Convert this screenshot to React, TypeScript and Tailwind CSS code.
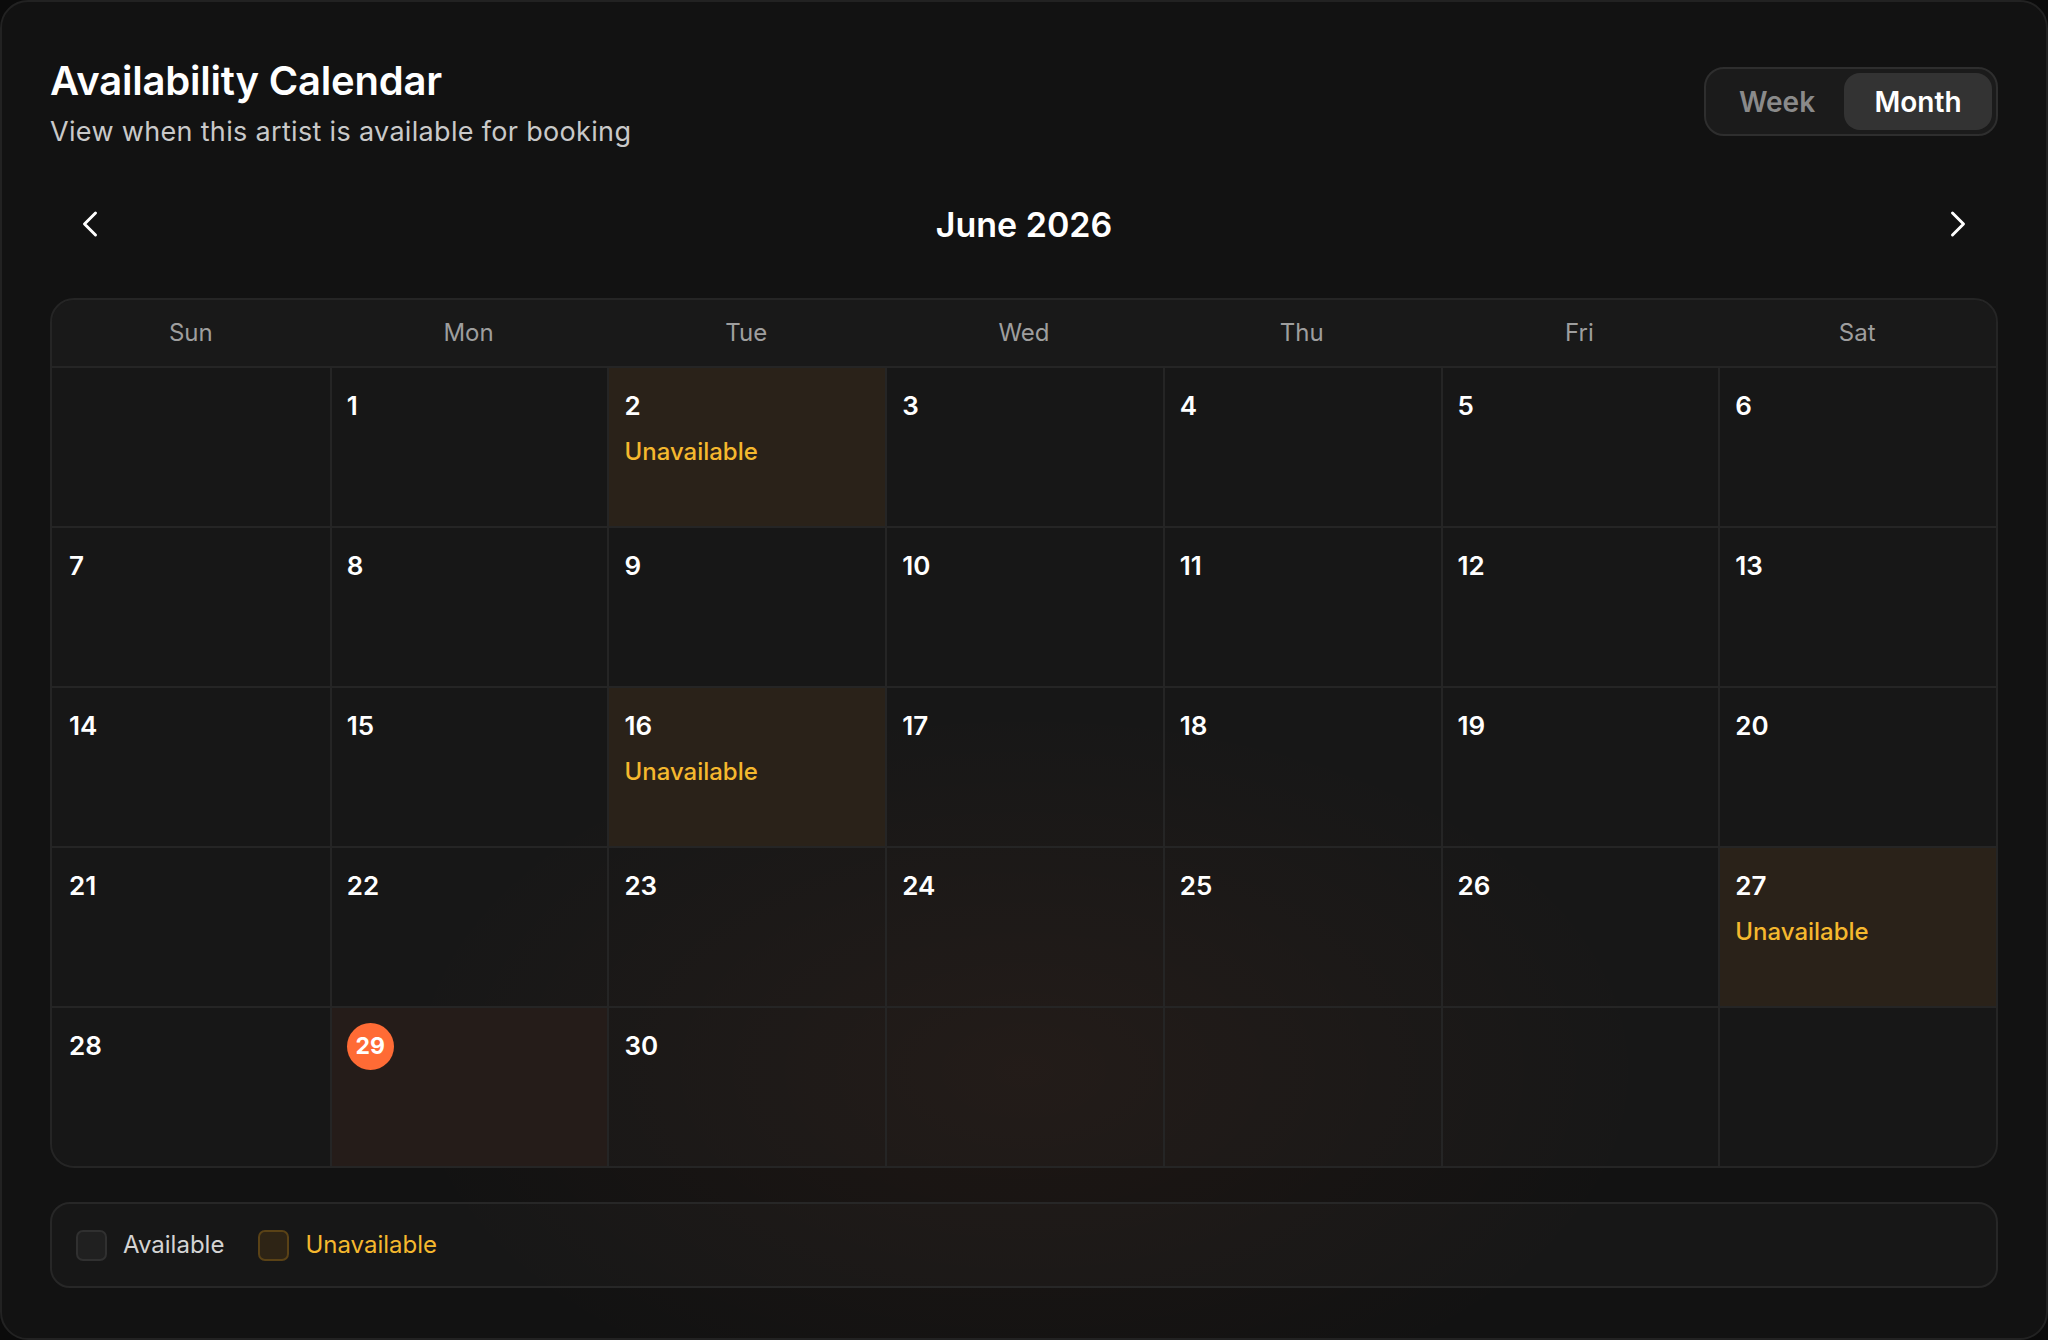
import { ChevronLeft, ChevronRight } from "lucide-react";

const WEEKDAYS = ["Sun", "Mon", "Tue", "Wed", "Thu", "Fri", "Sat"];

// June 2026 starts on a Monday
const LEADING_BLANKS = 1;
const DAYS_IN_MONTH = 30;
const UNAVAILABLE = new Set([2, 16, 27]);
const TODAY = 29;

type Cell = { day: number | null };

function buildCells(): Cell[] {
  const cells: Cell[] = [];
  for (let i = 0; i < LEADING_BLANKS; i++) cells.push({ day: null });
  for (let d = 1; d <= DAYS_IN_MONTH; d++) cells.push({ day: d });
  while (cells.length % 7 !== 0) cells.push({ day: null });
  return cells;
}

function DayCell({ day, index }: { day: number | null; index: number }) {
  const unavailable = day !== null && UNAVAILABLE.has(day);
  const isToday = day === TODAY;

  let bg = "bg-white/[0.025]";
  if (unavailable) bg = "bg-[#2a2219]";
  else if (isToday) bg = "bg-[#251c19]";

  return (
    <div
      className={`h-[160px] border-t-2 border-[#252525] pl-[15px] pr-[15px] pt-[22px] ${
        index % 7 !== 0 ? "border-l-2" : "pl-[17px]"
      } ${bg}`}
    >
      {day !== null && (
        <div className="flex h-[32px] items-center">
          {isToday ? (
            <span className="flex h-[47px] w-[47px] shrink-0 items-center justify-center rounded-full bg-[#ff6b35] text-[23px] font-bold text-white">
              {day}
            </span>
          ) : (
            <span className="text-[26px] font-semibold leading-[32px] text-white">{day}</span>
          )}
        </div>
      )}
      {unavailable && (
        <div className="mt-[14px] text-[24px] font-medium leading-[32px] text-[#f5b82e]">
          Unavailable
        </div>
      )}
    </div>
  );
}

export default function App() {
  const cells = buildCells();

  return (
    <div className="h-screen w-full bg-[#0b0b0b] font-['Inter',sans-serif]">
      <div className="flex h-full w-full flex-col rounded-[28px] border-2 border-[#222222] bg-[#121212] bg-[radial-gradient(ellipse_900px_520px_at_50%_80%,rgba(255,110,50,0.05),transparent_70%)] px-[48px] pt-[55px]">
        {/* Header */}
        <div className="flex items-start justify-between">
          <div>
            <h1 className="text-[40px] font-semibold leading-[48px] tracking-[-0.005em] text-white">
              Availability Calendar
            </h1>
            <p className="mt-[9px] text-[27px] leading-[36px] tracking-[0.012em] text-[#c9c9c9]">
              View when this artist is available for booking
            </p>
          </div>
          <div className="mt-[10px] flex items-center rounded-[20px] border-2 border-[#2e2e2e] bg-[#1b1b1b] p-[4px]">
            <button className="h-[57px] w-[134px] rounded-[16px] pl-[0px] text-[28px] font-semibold text-[#8a8a8a]">
              Week
            </button>
            <button className="h-[57px] w-[148px] rounded-[16px] bg-[#333333] text-[28px] font-semibold text-white">
              Month
            </button>
          </div>
        </div>

        {/* Month navigation */}
        <div className="mt-[50px] flex h-[48px] items-center justify-between px-[16px]">
          <button className="flex h-[48px] w-[48px] items-center justify-center text-white" aria-label="Previous month">
            <ChevronLeft size={44} strokeWidth={1.6} />
          </button>
          <h2 className="text-[34px] font-semibold text-white">June 2026</h2>
          <button className="flex h-[48px] w-[48px] items-center justify-center text-white" aria-label="Next month">
            <ChevronRight size={44} strokeWidth={1.6} />
          </button>
        </div>

        {/* Calendar grid */}
        <div className="mt-[50px] overflow-hidden rounded-[24px] border-2 border-[#252525]">
          <div className="grid grid-cols-7 bg-white/[0.03]">
            {WEEKDAYS.map((d) => (
              <div key={d} className="flex h-[66px] items-center justify-center text-[24px] text-[#9e9e9e]">
                {d}
              </div>
            ))}
          </div>
          <div className="grid grid-cols-7">
            {cells.map((c, i) => (
              <DayCell key={i} day={c.day} index={i} />
            ))}
          </div>
        </div>

        {/* Legend */}
        <div className="mt-[34px] flex h-[86px] items-center rounded-[20px] border-2 border-[#272727] bg-white/[0.025] pl-[24px]">
          <span className="h-[31px] w-[31px] rounded-[7px] border-2 border-[#303030] bg-[#202020]" />
          <span className="ml-[16px] text-[24px] text-[#d4d4d4]">Available</span>
          <span className="ml-[34px] h-[31px] w-[31px] rounded-[7px] border-2 border-[#5a4216] bg-[#2e2415]" />
          <span className="ml-[16px] text-[24px] text-[#f5b82e]">Unavailable</span>
        </div>
      </div>
    </div>
  );
}
